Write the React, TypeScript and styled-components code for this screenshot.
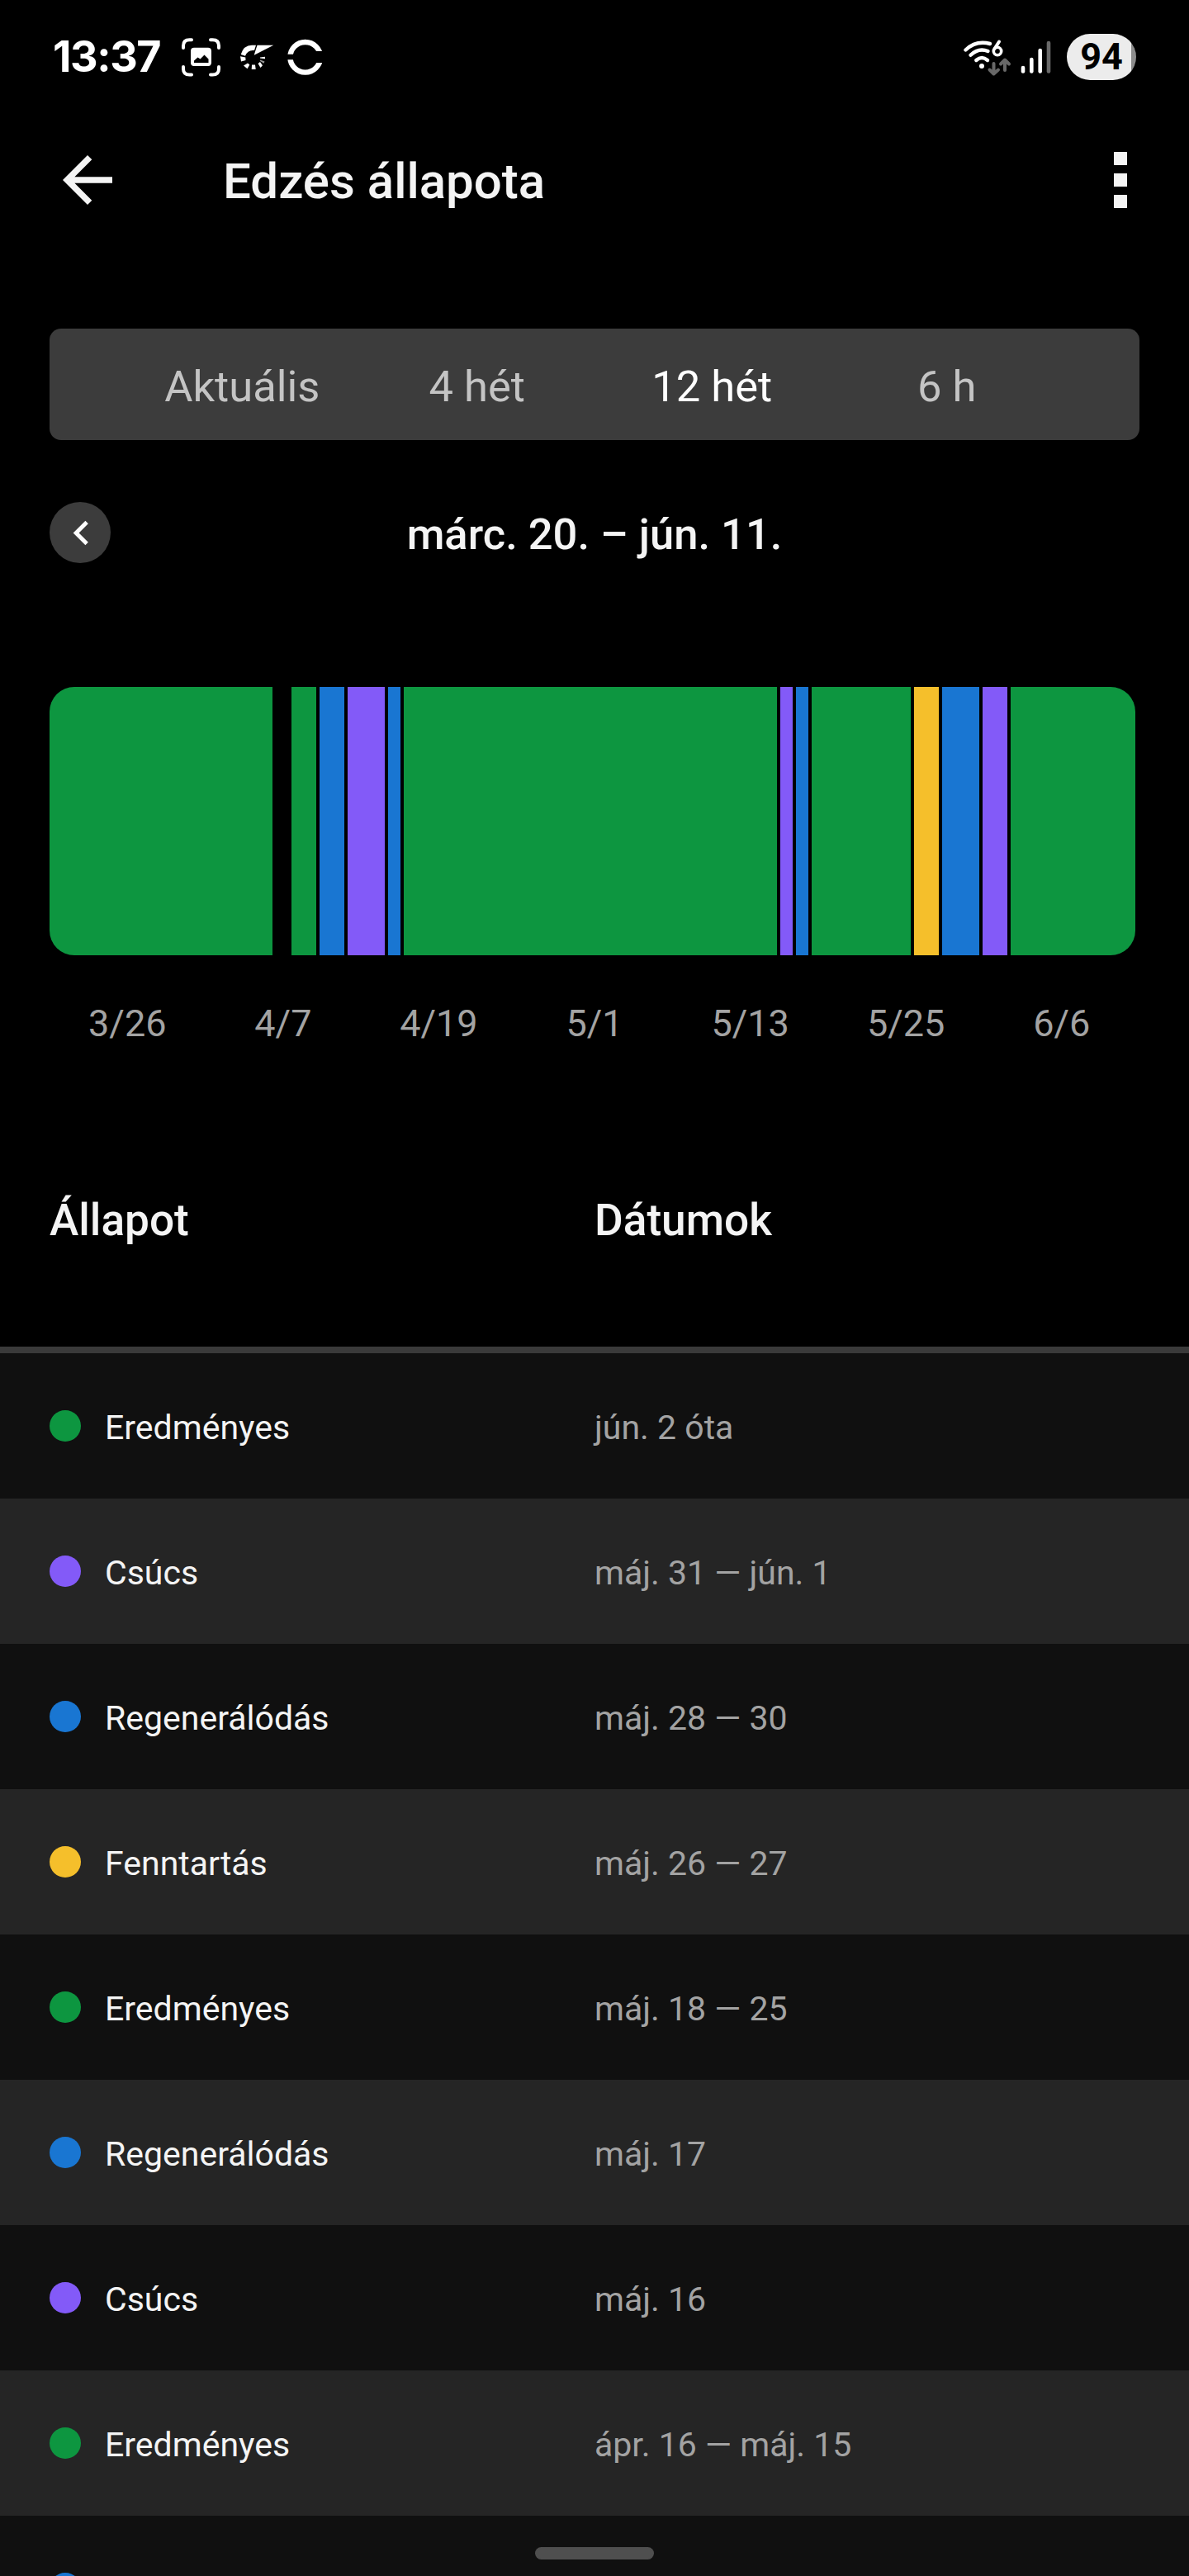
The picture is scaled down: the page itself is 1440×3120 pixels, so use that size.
import React from 'react';
import styled, { createGlobalStyle } from 'styled-components';

const GREEN = '#0d9640';
const BLUE = '#1976d2';
const PURPLE = '#835af8';
const YELLOW = '#f5bf2b';

const GlobalStyle = createGlobalStyle`
  * { box-sizing: border-box; }
  body { margin: 0; background: #000; }
`;

const Screen = styled.div`
  position: relative;
  display: flex;
  flex-direction: column;
  width: 1440px;
  height: 3120px;
  overflow: hidden;
  background: #000;
  color: #f4f4f4;
  font-family: Roboto, sans-serif;
`;

const StatusBar = styled.header`
  flex: none;
  display: flex;
  align-items: center;
  justify-content: space-between;
  height: 138px;
  padding: 0 64px;
`;

const StatusGroup = styled.div`
  display: flex;
  align-items: center;
`;

const Clock = styled.span`
  width: 156px;
  font: 700 52px/60px Inter, sans-serif;
  letter-spacing: -1.4px;
  color: #fff;
`;

const Drawing = styled.svg`
  display: block;
  flex: none;
`;

const Battery = styled.div`
  display: flex;
  align-items: center;
  justify-content: center;
  width: 84px;
  height: 56px;
  border-radius: 28px;
  background: linear-gradient(to right, #ececec 78px, #8c8c8c 78px);
  color: #000;
  font: 700 45px/56px Roboto, sans-serif;
`;

const AppBar = styled.div`
  flex: none;
  display: flex;
  align-items: center;
  height: 160px;
  padding: 0 68px 0 61px;
`;

const Title = styled.h1`
  flex: 1;
  margin: 0 0 0 119px;
  padding-top: 4px;
  font-size: 60px;
  font-weight: 500;
  line-height: 70px;
`;

const Overflow = styled.div`
  display: flex;
  flex-direction: column;
  gap: 10px;
  width: 23px;
`;

const OverflowDot = styled.i`
  width: 16px;
  height: 16px;
  background: #f4f4f4;
`;

const Tabs = styled.nav`
  flex: none;
  display: flex;
  align-items: center;
  height: 135px;
  margin: 100px 60px 0;
  padding: 5px 91px 0;
  border-radius: 14px;
  background: #3c3c3c;
`;

const Tab = styled.span<{ $active?: boolean }>`
  flex: 1;
  text-align: center;
  font-size: 52.5px;
  line-height: 62px;
  color: ${(p) => (p.$active ? '#fff' : '#c4c4c4')};
`;

const Period = styled.div`
  flex: none;
  display: grid;
  grid-template-columns: 74px 1fr 74px;
  align-items: center;
  height: 74px;
  margin: 75px 60px 0;
`;

const PrevButton = styled.span`
  display: flex;
  align-items: center;
  justify-content: center;
  width: 74px;
  height: 74px;
  border-radius: 50%;
  background: #3c3c3c;
`;

const PeriodText = styled.span`
  padding-top: 4px;
  text-align: center;
  font-size: 52.5px;
  font-weight: 500;
  line-height: 62px;
`;

const Chart = styled.div`
  flex: none;
  display: flex;
  width: 1315px;
  height: 325px;
  margin: 150px 0 0 60px;
  border-radius: 30px;
  overflow: hidden;
`;

const Segment = styled.div<{ $color: string; $width: number; $gap?: number }>`
  flex: none;
  width: ${(p) => p.$width}px;
  margin-right: ${(p) => p.$gap ?? 4}px;
  background: ${(p) => p.$color};
`;

const Axis = styled.div`
  flex: none;
  display: flex;
  width: 1320px;
  margin: 56px 0 0 60px;
`;

const AxisLabel = styled.span`
  flex: 1;
  text-align: center;
  font-size: 45px;
  line-height: 54px;
  color: #a3a3a3;
`;

const TableHead = styled.div`
  flex: none;
  display: grid;
  grid-template-columns: 660px 1fr;
  align-items: start;
  height: 372px;
  padding: 180px 60px 0;
  border-bottom: 8px solid #3a3a3a;
  font-size: 53.2px;
  font-weight: 500;
  line-height: 62px;
`;

const Row = styled.div`
  flex: none;
  display: grid;
  grid-template-columns: 660px 1fr;
  align-items: center;
  height: 176px;
  padding: 0 60px;
  background: #101010;
  font-size: 41px;
  line-height: 48px;

  &:nth-child(even) {
    background: #252525;
  }
`;

const State = styled.span`
  display: flex;
  align-items: center;
  gap: 29px;
`;

const Dot = styled.i<{ $color: string }>`
  width: 38px;
  height: 38px;
  border-radius: 50%;
  background: ${(p) => p.$color};
`;

const RowText = styled.span`
  padding-top: 4px;
`;

const Dates = styled(RowText)`
  color: #a3a3a3;
`;

const HomeHandle = styled.div`
  position: absolute;
  left: 648px;
  top: 3085px;
  width: 144px;
  height: 15px;
  border-radius: 8px;
  background: #4f4f4f;
`;

const segments = [
  { color: GREEN, width: 270, gap: 23 },
  { color: GREEN, width: 30 },
  { color: BLUE, width: 30 },
  { color: PURPLE, width: 45 },
  { color: BLUE, width: 15 },
  { color: GREEN, width: 452 },
  { color: PURPLE, width: 15 },
  { color: BLUE, width: 15 },
  { color: GREEN, width: 120 },
  { color: YELLOW, width: 30 },
  { color: BLUE, width: 45 },
  { color: PURPLE, width: 30 },
  { color: GREEN, width: 151, gap: 0 },
];

const axisLabels = ['3/26', '4/7', '4/19', '5/1', '5/13', '5/25', '6/6'];

const tabs = ['Aktuális', '4 hét', '12 hét', '6 h'];

const rows = [
  { state: 'Eredményes', color: GREEN, dates: 'jún. 2 óta' },
  { state: 'Csúcs', color: PURPLE, dates: 'máj. 31 — jún. 1' },
  { state: 'Regenerálódás', color: BLUE, dates: 'máj. 28 — 30' },
  { state: 'Fenntartás', color: YELLOW, dates: 'máj. 26 — 27' },
  { state: 'Eredményes', color: GREEN, dates: 'máj. 18 — 25' },
  { state: 'Regenerálódás', color: BLUE, dates: 'máj. 17' },
  { state: 'Csúcs', color: PURPLE, dates: 'máj. 16' },
  { state: 'Eredményes', color: GREEN, dates: 'ápr. 16 — máj. 15' },
  { state: '', color: BLUE, dates: '' },
];

/* Screenshot frame, gauge and split ring. */
const NotificationIcons = () => (
  <Drawing width="172" height="48" viewBox="0 0 172 48">
    <clipPath id="ring-halves">
      <path d="M125 0H172V17H150V20.700H125ZM125 27.300H150V31H172V48H125Z" />
    </clipPath>
    <path
      fill="none"
      stroke="#fff"
      strokeWidth="4"
      strokeLinecap="round"
      d="M2 13V10.500Q2 3.300 9.500 3.300H12M35 3.300H37.500Q45 3.300 45 10.500V13M45 36V38.500Q45 45.500 37.500 45.500H35M12 45.500H9.500Q2 45.500 2 38.500V36"
    />
    <path
      fill="#fff"
      fillRule="evenodd"
      d="M15 12.700H32Q36 12.700 36 16.700V31Q36 35 32 35H15Q11 35 11 31V16.700Q11 12.700 15 12.700ZM15 31H32.500V26.500L27.500 21.500L22.500 26.500L19.500 24.500L15 28.500Z"
    />
    <g fill="#fff">
      <path d="M71.700 21Q75 9.700 85 9.700H90L88 16Q80 15 77 22.700Z" />
      <path d="M91.500 9.700H111.300L87.700 21.700Z" />
      <path d="M71 23.300L77.300 24.500L77.500 28L72 29.500Z" />
      <path d="M75 34.500L80 31.500L82.300 33.500L79.500 38.200Z" />
      <path d="M85 33.500H89L89.700 39H84.700Z" />
      <path d="M92.500 32L95 30L98 34.200L95.500 37Z" />
      <path d="M95.300 27.500L100.500 29.500L99.500 31.700L94.700 28.700Z" opacity="0.600" />
      <path d="M95 24.500L101 23.700V26.200L95 25.500Z" />
    </g>
    <circle
      cx="149.700"
      cy="24.300"
      r="18.300"
      fill="none"
      stroke="#fff"
      strokeWidth="6.400"
      clipPath="url(#ring-halves)"
    />
  </Drawing>
);

/* Wi-Fi 6 with traffic arrows, then cellular bars. */
const NetworkIcons = () => (
  <Drawing width="125" height="56" viewBox="0 0 125 56">
    <g fill="none" stroke="#fff" strokeWidth="4.400">
      <g strokeLinecap="round">
        <path d="M2.500 19.500Q15 7.500 32 12" />
        <path d="M8.500 25.800Q18 16.500 29.500 21" />
        <path d="M15.300 32Q22 26 29 32" />
      </g>
    </g>
    <circle cx="22" cy="39" r="3" fill="#fff" />
    <path d="M43 9.500L37.500 18" stroke="#fff" strokeWidth="4" strokeLinecap="round" />
    <circle cx="41" cy="21" r="4.700" fill="none" stroke="#fff" strokeWidth="3.600" />
    <g fill="none" stroke="#686868" strokeWidth="4" strokeLinecap="round" strokeLinejoin="round">
      <path d="M36.500 36V48M31.500 43.500L36.500 48.500L42 43.500" />
      <path d="M50 44V32M45 36.500L50 31.500L55 36.500" />
    </g>
    <g stroke="#fff" strokeWidth="4.600" strokeLinecap="round">
      <path d="M72 41V45.500" />
      <path d="M82.300 31V45.500" />
      <path d="M92.700 20V45.500" />
      <path d="M103 11V45.500" stroke="#686868" />
    </g>
  </Drawing>
);

export default function App() {
  return (
    <Screen>
      <GlobalStyle />
      <StatusBar>
        <StatusGroup>
          <Clock>13:37</Clock>
          <NotificationIcons />
        </StatusGroup>
        <StatusGroup>
          <NetworkIcons />
          <Battery>94</Battery>
        </StatusGroup>
      </StatusBar>

      <AppBar>
        <Drawing width="90" height="90" viewBox="0 0 24 24">
          <path fill="#f4f4f4" d="M20 11H7.830l5.590-5.590L12 4l-8 8 8 8 1.410-1.410L7.830 13H20v-2z" />
        </Drawing>
        <Title>Edzés állapota</Title>
        <Overflow>
          <OverflowDot />
          <OverflowDot />
          <OverflowDot />
        </Overflow>
      </AppBar>

      <Tabs>
        {tabs.map((tab) => (
          <Tab key={tab} $active={tab === '12 hét'}>
            {tab}
          </Tab>
        ))}
      </Tabs>

      <Period>
        <PrevButton>
          <Drawing width="59" height="59" viewBox="0 0 24 24">
            <path fill="#fff" d="M15.800 7.410L14.390 6l-6 6 6 6 1.410-1.410L11.220 12z" />
          </Drawing>
        </PrevButton>
        <PeriodText>márc. 20. – jún. 11.</PeriodText>
      </Period>

      <Chart>
        {segments.map((s, i) => (
          <Segment key={i} $color={s.color} $width={s.width} $gap={s.gap} />
        ))}
      </Chart>
      <Axis>
        {axisLabels.map((label) => (
          <AxisLabel key={label}>{label}</AxisLabel>
        ))}
      </Axis>

      <TableHead>
        <span>Állapot</span>
        <span>Dátumok</span>
      </TableHead>
      <div>
        {rows.map((row, i) => (
          <Row key={i}>
            <State>
              <Dot $color={row.color} />
              <RowText>{row.state}</RowText>
            </State>
            <Dates>{row.dates}</Dates>
          </Row>
        ))}
      </div>
      <HomeHandle />
    </Screen>
  );
}
